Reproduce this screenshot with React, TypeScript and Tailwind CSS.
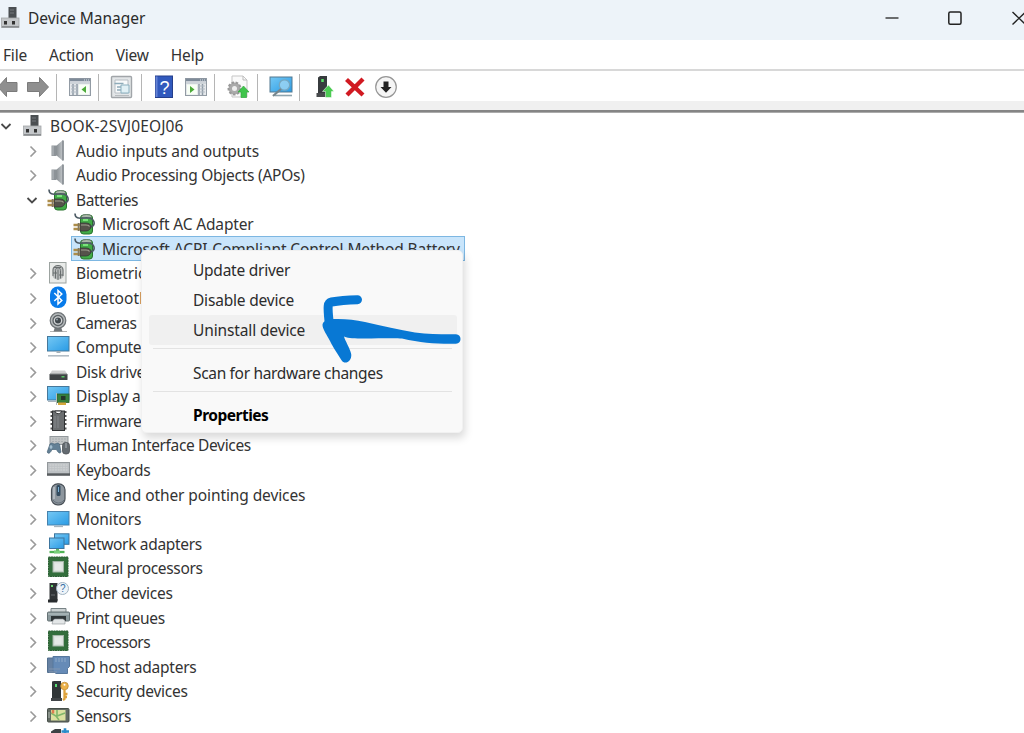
import type { ReactNode } from "react";

type IconName =
  | "host" | "speaker" | "battery" | "fingerprint" | "bluetooth" | "camera"
  | "computer" | "disk" | "display" | "firmware" | "hid" | "keyboard" | "mouse"
  | "monitor" | "network" | "chip" | "other" | "printer" | "sd" | "security"
  | "sensors" | "software";

interface TreeNode {
  label: string;
  icon: IconName;
  level: 0 | 1 | 2;
  open?: boolean;
  selected?: boolean;
  tracking?: string;
}

const nodes: TreeNode[] = [
  { label: "BOOK-2SVJ0EOJ06", icon: "host", level: 0, open: true, tracking: "tracking-[0.15px]" },
  { label: "Audio inputs and outputs", icon: "speaker", level: 1, tracking: "tracking-[-0.07px]" },
  { label: "Audio Processing Objects (APOs)", icon: "speaker", level: 1 },
  { label: "Batteries", icon: "battery", level: 1, open: true, tracking: "tracking-[-0.35px]" },
  { label: "Microsoft AC Adapter", icon: "battery", level: 2, tracking: "tracking-[-0.15px]" },
  { label: "Microsoft ACPI-Compliant Control Method Battery", icon: "battery", level: 2, selected: true, tracking: "tracking-[-0.1px]" },
  { label: "Biometric devices", icon: "fingerprint", level: 1, tracking: "tracking-[-0.1px]" },
  { label: "Bluetooth", icon: "bluetooth", level: 1, tracking: "tracking-[0.1px]" },
  { label: "Cameras", icon: "camera", level: 1, tracking: "tracking-[-0.5px]" },
  { label: "Computer", icon: "computer", level: 1 },
  { label: "Disk drives", icon: "disk", level: 1 },
  { label: "Display adapters", icon: "display", level: 1, tracking: "tracking-[-0.1px]" },
  { label: "Firmware", icon: "firmware", level: 1, tracking: "tracking-[-0.4px]" },
  { label: "Human Interface Devices", icon: "hid", level: 1, tracking: "tracking-[-0.35px]" },
  { label: "Keyboards", icon: "keyboard", level: 1 },
  { label: "Mice and other pointing devices", icon: "mouse", level: 1, tracking: "tracking-[-0.1px]" },
  { label: "Monitors", icon: "monitor", level: 1, tracking: "tracking-[-0.05px]" },
  { label: "Network adapters", icon: "network", level: 1, tracking: "tracking-[-0.32px]" },
  { label: "Neural processors", icon: "chip", level: 1, tracking: "tracking-[-0.32px]" },
  { label: "Other devices", icon: "other", level: 1 },
  { label: "Print queues", icon: "printer", level: 1, tracking: "tracking-[-0.32px]" },
  { label: "Processors", icon: "chip", level: 1, tracking: "tracking-[-0.5px]" },
  { label: "SD host adapters", icon: "sd", level: 1 },
  { label: "Security devices", icon: "security", level: 1 },
  { label: "Sensors", icon: "sensors", level: 1, tracking: "tracking-[-0.35px]" },
  { label: "", icon: "software", level: 1 },
];

const levelPadding = { 0: "pl-0", 1: "pl-[26px]", 2: "pl-[52px]" };

// All tree icons share a 24x24 grid
const icons: Record<IconName, ReactNode> = {
  host: (
    <>
      <rect x="10.5" y="1" width="8" height="12" fill="#4b4f52" />
      <path d="M12 4h4M12 7h4" stroke="#74797c" />
      <rect x="3.5" y="12" width="17.5" height="9.5" fill="#c3c6c9" stroke="#a3a6a9" strokeWidth=".8" />
      <path d="M4 20.8h17" stroke="#85888b" strokeWidth="1.4" />
      <rect x="6" y="15" width="3" height="3.5" fill="#333" />
      <rect x="14" y="15" width="3" height="3.5" fill="#333" />
    </>
  ),
  speaker: (
    <>
      <path d="M10 7 17 1v21l-7-6z" fill="url(#dm-steel)" />
      <path d="M17 1.5v20" stroke="#8b9196" strokeWidth="1.8" />
      <rect x="5.5" y="6.5" width="5" height="10.5" fill="#8d9398" />
      <path d="M7 7v9.5" stroke="#b9bec2" />
    </>
  ),
  battery: (
    <>
      <rect x="8.5" y="3" width="12" height="19" rx="3" fill="#42ab47" stroke="#26722b" />
      <ellipse cx="14.5" cy="4.5" rx="5" ry="2" fill="#a9b8a8" stroke="#56705a" strokeWidth=".8" />
      <path d="M11 9v-2h5v2z" fill="#7be27c" />
      <path d="M3 1.5c0 5 4 5 8 4.5s10-.5 11 4-3 5-6 5" fill="none" stroke="#4d5b65" strokeWidth="1.6" />
      <path d="M8 11h6c3 0 5 1.5 5 3.5s-2 4.5-5 4.5H8z" fill="#55524a" stroke="#2e3230" strokeWidth=".7" />
      <path d="M9 13h5c2 0 3 .5 3.5 1.5" fill="none" stroke="#a09f90" strokeWidth="1.2" />
      <path d="M1.5 13H8M1.5 17H8" stroke="#ad8d4a" strokeWidth="2.3" />
      <path d="M6.5 11v8" stroke="#83785f" strokeWidth="1.6" />
    </>
  ),
  fingerprint: (
    <>
      <rect x="3.5" y="1.5" width="16.5" height="20.5" fill="#e9ebe9" stroke="#9ca3a0" />
      <path d="M6.5 8.5c0-6 11-6 11 0V14c0 6-11 6-11 0z" fill="#b9bcbc" />
      <path d="M7 15V9c0-6 10-6 10 0v6M9.5 17.5V9.5c0-3.5 5-3.5 5 0v8M12 8.5V19M7 12h4M13 14h4M8 6.5h7" fill="none" stroke="#696e6f" />
    </>
  ),
  bluetooth: (
    <>
      <rect x="4" y=".5" width="16.5" height="21.5" rx="8" fill="#087bea" />
      <path d="m8.3 7 7.5 7.5-3.8 3.5V4.5l3.8 3.5-7.5 7" fill="none" stroke="#fff" strokeWidth="1.5" />
    </>
  ),
  camera: (
    <>
      <path d="M4 20.5h17" stroke="#b4b4b4" />
      <path d="m9 16-1.5 4.5h9L15 16z" fill="#717679" />
      <circle cx="12" cy="9.5" r="7.8" fill="#b5b9bb" stroke="#6d7275" strokeWidth="1.2" />
      <circle cx="12" cy="9.5" r="5" fill="#d1d4d5" stroke="#5b6165" strokeWidth="1.3" />
      <circle cx="12" cy="9.5" r="3" fill="#41484d" />
      <circle cx="11" cy="8.5" r="1" fill="#909fa7" />
    </>
  ),
  computer: (
    <>
      <rect x="1.5" y="1.5" width="21.5" height="14.5" fill="url(#dm-screen)" stroke="#46789b" />
      <path d="M10.5 16h4v2h-4z" fill="#a4b0b8" />
      <path d="M2 20.8h21" stroke="#b2bdc5" strokeWidth="1.6" />
    </>
  ),
  disk: (
    <>
      <path d="M6 10.5h13l2.5 4h-18z" fill="#cfcfcf" />
      <rect x="3.5" y="14" width="18" height="6" rx=".5" fill="#3f4244" />
      <path d="M4 14h17" stroke="#858889" />
      <rect x="15.5" y="16" width="3" height="1.5" fill="#56c465" />
    </>
  ),
  display: (
    <>
      <rect x="1.5" y="2.5" width="21.5" height="13.5" fill="url(#dm-screen)" stroke="#46789b" />
      <path d="M2 17.5h8" stroke="#a9b5bd" />
      <rect x="11" y="10" width="12" height="8.5" fill="#357f3c" stroke="#286030" strokeWidth=".8" />
      <rect x="15" y="12" width="4.5" height="4" fill="#26352b" />
      <path d="M12 18.5h8v2.5h-8z" fill="#d4a73a" />
      <path d="M10.5 9v12" stroke="#b6bcb8" />
    </>
  ),
  firmware: (
    <>
      <path d="M4.5 3h16M4.5 7h16M4.5 11h16M4.5 15h16M4.5 19.5h16" stroke="#565656" strokeWidth="2.2" />
      <rect x="6.5" y="2" width="12" height="19.5" fill="#6b6e70" stroke="#303234" />
      <path d="M9 2c0 3.5 6.5 3.5 6.5 0z" fill="#fff" stroke="#303234" />
      <path d="M9 7v12M12 7v12" stroke="#7d8082" strokeWidth="1.5" />
    </>
  ),
  hid: (
    <>
      <rect x="4" y="3.5" width="18" height="8" fill="#c2c5c6" stroke="#93999d" />
      <path d="M6 6h14M6 8.5h14" stroke="#a9aeb1" strokeDasharray="2 1" />
      <path d="M4 11c2-2 3 0 4.5 0s3-2 5 0l1.5 8c-1 2.5-3.5 0-4.5-2.500H6C5 19 2.500 22 1.200 19z" fill="#638095" stroke="#496377" strokeWidth=".7" />
      <path d="M5 12v4M3.500 14h3" stroke="#b8d2e2" />
      <rect x="16.5" y="9.5" width="7" height="11.5" rx="3" fill="#646b71" stroke="#4b5155" strokeWidth=".8" />
      <path d="M20 10v5" stroke="#adb4ba" />
    </>
  ),
  keyboard: (
    <>
      <rect x="1.5" y="4.5" width="22" height="12.5" fill="#bdc1c4" stroke="#93989b" />
      <path d="M3.500 7h18M3.500 9.500h18M3.500 12h18" stroke="#cdd0d1" strokeWidth="1.3" strokeDasharray="2 .7" />
      <path d="M1 16.500h23" stroke="#595d60" strokeWidth="2.4" />
    </>
  ),
  mouse: (
    <>
      <rect x="5.5" y=".8" width="13.5" height="21" rx="6" fill="#8d969e" stroke="#495057" strokeWidth="1.2" />
      <path d="M8 4v12" stroke="#c3cad0" strokeWidth="1.3" />
      <rect x="10.5" y="2" width="4" height="11" rx="1.5" fill="#344c60" />
      <path d="M12.5 4v5" stroke="#7ab0d4" />
      <path d="M7 17c3 4 8 4 11 0" fill="none" stroke="#65707a" />
    </>
  ),
  monitor: (
    <>
      <rect x="1.5" y="4.5" width="21.5" height="13.5" fill="url(#dm-screen)" stroke="#4682ad" />
      <path d="M8 19.5h9" stroke="#a8b5be" strokeWidth="1.3" />
    </>
  ),
  network: (
    <>
      <rect x="8.5" y="1.8" width="14.5" height="10.5" fill="url(#dm-screen)" stroke="#3c759e" />
      <rect x="3.5" y="6" width="14.5" height="10.5" fill="url(#dm-screen)" stroke="#3c759e" />
      <path d="M10 17h3v2h-3z" fill="#60b265" />
      <path d="M3.5 20h15" stroke="#4fb455" strokeWidth="2.3" />
      <path d="M8 18.5h6v3H8z" fill="#77cf79" />
    </>
  ),
  chip: (
    <>
      <rect x="2.5" y="1" width="19.5" height="19.5" fill="#336e3c" />
      <rect x="2.5" y="1" width="19.5" height="19.5" fill="none" stroke="#2c6135" strokeDasharray="2 .5" />
      <rect x="7" y="5.5" width="10.5" height="10.5" fill="#dce3de" stroke="#a5b6a8" />
      <rect x="9" y="7.5" width="6.5" height="6.5" fill="#e6eae7" />
    </>
  ),
  other: (
    <>
      <path d="M3.5 2h8v17h-8z" fill="#303436" />
      <path d="M2 18.5h10l-1 3H2z" fill="#292c2e" />
      <path d="M5 5h2" stroke="#68d572" strokeWidth="2" />
      <path d="M5 14h4" stroke="#666b6e" />
      <circle cx="16.5" cy="7.5" r="6" fill="#eef4f9" stroke="#a2b4c2" />
      <text x="14" y="11" fontSize="10" fontFamily="Liberation Sans, sans-serif" fill="#336ca3">?</text>
    </>
  ),
  printer: (
    <>
      <path d="M5 7V2.5h15V7" fill="#cbd1d2" stroke="#788386" />
      <rect x="1.5" y="6" width="22" height="9" rx="1" fill="#8b999c" stroke="#667275" />
      <path d="M2 8h21" stroke="#bdc8ca" />
      <path d="M5 10h15v5H5z" fill="#303638" />
      <path d="m7 14.5 1.5-1.5h8.5l2 1.5v3.5H6z" fill="#e3e6e7" stroke="#8b9193" strokeWidth=".6" />
    </>
  ),
  sd: (
    <>
      <path d="M1.5 3h14v14.5h-14z" fill="#6681a3" stroke="#53708f" />
      <path d="M7 1.5h16.5v10l-2 2v5H10l-3-2.500z" fill="#668bb7" stroke="#57789d" />
      <path d="M10 3v4M13 3v4M16 3v4M19 3v4" stroke="#8fabc9" />
      <path d="M3 14h11M3 17h8" stroke="#8296b0" />
    </>
  ),
  security: (
    <>
      <path d="M6 2.5 8 2h7v17.500H6z" fill="#313638" />
      <path d="M5 19h11v3H5z" fill="#414548" />
      <path d="M10 5v3" stroke="#58dc73" strokeWidth="2" />
      <circle cx="18.5" cy="7" r="3.8" fill="#edb34b" stroke="#c18c33" strokeWidth=".8" />
      <circle cx="18.5" cy="5.8" r="1" fill="#fff" />
      <path d="M18.500 10v10l-1.500 1M19 15h2.500M19 18h2" fill="none" stroke="#dfa33d" strokeWidth="2.3" />
    </>
  ),
  sensors: (
    <>
      <rect x="1.5" y="4.5" width="21.5" height="13.5" rx="1" fill="#626a63" stroke="#464e48" />
      <rect x="5" y="6" width="14.5" height="10.5" fill="#dce1a0" />
      <path d="m5 9 5 3 3 4M11 6v6l8-3" fill="none" stroke="#80b66a" strokeWidth="1.6" />
      <path d="M7 6v3.5" stroke="#dc7e50" strokeWidth="2.5" />
      <path d="M3 8v6" stroke="#b2bbb3" />
    </>
  ),
  software: (
    <>
      <path d="M5 3.5 9 1h6v21H5z" fill="#3d4245" />
      <path d="M19 .3v7M15.5 3.5H23" stroke="#2c8cc9" strokeWidth="2.6" />
    </>
  ),
};

function Chevron({ open }: { open?: boolean }) {
  return (
    <svg width="12" height="12" viewBox="0 0 12 12" fill="none" className="shrink-0">
      {open ? (
        <path d="m1.500 4 4.500 4.500L10.500 4" stroke="#4a4a4a" strokeWidth="1.8" />
      ) : (
        <path d="m4.500 1.500 5 5-5 5" stroke="#9a9a9a" strokeWidth="1.6" />
      )}
    </svg>
  );
}

function TreeRow({ node }: { node: TreeNode }) {
  return (
    <li className={`flex h-[24.58px] items-center ${levelPadding[node.level]}`}>
      <span className="flex w-5 items-center">
        {node.level !== 2 && <Chevron open={node.open} />}
      </span>
      <span
        className={
          node.selected
            ? "-ml-px flex h-[25px] w-[394px] items-center border border-[#7db7e2] bg-[#c9e5fb]"
            : "flex items-center"
        }
      >
        <svg width="24" height="24" viewBox="0 0 24 24" className="shrink-0">
          {icons[node.icon]}
        </svg>
        <span className={`ml-1.5 whitespace-nowrap pt-px leading-[23px] ${node.tracking ?? "tracking-[-0.25px]"}`}>
          {node.label}
        </span>
      </span>
    </li>
  );
}

function Separator() {
  return <div className="h-[27px] w-px shrink-0 bg-[#b5b5b5]" />;
}

function ToolIcon({ children }: { children: ReactNode }) {
  return (
    <svg width="24" height="24" viewBox="0 0 24 24" fill="none" className="shrink-0">
      {children}
    </svg>
  );
}

function PanelGlyph({ flip }: { flip?: boolean }) {
  return (
    <>
      <rect x="1.5" y="3.5" width="21" height="17" fill="#e5e8eb" stroke="#929ba4" />
      <path d="M2 5h20" stroke="#7e8b99" strokeWidth="2.5" />
      <path d="M16 5h5" stroke="#dce3e8" strokeDasharray="1 1" />
      <path d="M2 8h20" stroke="#b7c0c8" />
      {flip ? (
        <>
          <rect x="3" y="9.5" width="10" height="10" fill="#f8fff5" />
          <path d="m6 11 4.500 3.500L6 18z" fill="#4cab39" />
          <path d="M15 9v11M18.500 9v11" stroke="#8f9ba6" strokeWidth="1.5" />
          <path d="M15 11h6M15 14h6M15 17h6" stroke="#b2bbc4" />
        </>
      ) : (
        <>
          <rect x="11" y="9.5" width="10" height="10" fill="#f8fff5" />
          <path d="m18 11-4.500 3.500L18 18z" fill="#4cab39" />
          <path d="M5 9v11M9 9v11" stroke="#8f9ba6" strokeWidth="1.5" />
          <path d="M3 11h6M3 14h6M3 17h6" stroke="#b2bbc4" />
        </>
      )}
    </>
  );
}

function Toolbar() {
  return (
    <div className="flex h-[30px] items-center bg-white pt-0.5">
      <div className="-ml-[3px] flex items-center gap-1 pr-[7px]">
        <ToolIcon>
          <path d="M1 12 9.500 2.500V7.500h10.500v9H9.500v5z" fill="#8f8f8f" stroke="#7b7b7b" />
        </ToolIcon>
        <ToolIcon>
          <path d="M23.500 12 14.500 2.500V7.500H2.500v9h12v5z" fill="#8f8f8f" stroke="#7b7b7b" />
        </ToolIcon>
      </div>
      <Separator />
      <div className="pl-[11px] pr-[6px]"><ToolIcon><PanelGlyph /></ToolIcon></div>
      <Separator />
      <div className="pl-[11px] pr-[7px]">
        <ToolIcon>
          <rect x="1.5" y="1.5" width="20" height="21" rx="1" fill="#e3e6e8" stroke="#a1a5a9" strokeWidth="1.4" />
          <path d="M5 5h13v13H5z" fill="#f8fafb" stroke="#b7bec4" />
          <path d="M4.500 8.500h9M7 12h4M7 15h4" stroke="#8eabb9" strokeWidth="1.3" />
          <path d="M11 10h8v8h-8z" fill="#e1f0f5" stroke="#8bb0bf" />
          <path d="M5 20.500h14" stroke="#b8bcbf" />
        </ToolIcon>
      </div>
      <Separator />
      <div className="flex gap-2 pl-[10px] pr-[6px]">
        <ToolIcon>
          <rect x="3.5" y="1" width="17" height="21.5" fill="#3159bd" stroke="#253f8b" />
          <path d="M4.500 1.500v20.500" stroke="#6583d4" strokeWidth="2" />
          <text x="7.5" y="18.5" fontSize="18" fontFamily="Liberation Sans, sans-serif" fill="#fff">?</text>
        </ToolIcon>
        <ToolIcon><PanelGlyph flip /></ToolIcon>
      </div>
      <Separator />
      <div className="pl-[11px] pr-[7px]">
        <ToolIcon>
          <path d="M6 1h11l4 4v17H6z" fill="#fafafa" stroke="#c5c5c5" />
          <path d="M17 1v4h4" stroke="#bbb" />
          <circle cx="8.5" cy="13.5" r="6" fill="#aaa" stroke="#999" strokeWidth="2" strokeDasharray="2.5 1.6" />
          <circle cx="8.5" cy="13.5" r="2.5" fill="#eee" />
          <path d="m17.500 11 5.500 6h-2.500v5.500H15V17h-3z" fill="#3fc54b" stroke="#35a740" strokeWidth=".7" />
        </ToolIcon>
      </div>
      <Separator />
      <div className="pl-[11px] pr-[6px]">
        <ToolIcon>
          <rect x="1" y="2" width="22" height="15" fill="url(#dm-screen)" stroke="#537990" />
          <path d="M6 20.500h17" stroke="#8fa4ae" strokeWidth="1.6" />
          <circle cx="15.5" cy="10" r="5.2" fill="#9ed6f4" fillOpacity=".8" stroke="#75a7c0" strokeWidth="1.3" />
          <path d="m12 14-8 7" stroke="#76858c" strokeWidth="2.3" />
        </ToolIcon>
      </div>
      <Separator />
      <div className="flex items-center gap-[7px] pl-[12px]">
        <ToolIcon>
          <path d="M6 2.500 8 1h7v18H6z" fill="#373b3d" />
          <path d="M4.500 18H16v4H4.500z" fill="#474a4c" />
          <path d="M10.500 4v3" stroke="#58e166" strokeWidth="2.5" />
          <path d="m16.500 10 5.500 6.500h-2.500v6h-6v-6h-3z" fill="#4bca52" stroke="#fff" strokeWidth=".5" />
        </ToolIcon>
        <ToolIcon>
          <path d="m3.500 4.500 16.500 15.500M20 4 4 20" stroke="#d11921" strokeWidth="4.3" />
        </ToolIcon>
        <ToolIcon>
          <circle cx="12" cy="12" r="10.3" fill="#f5f5f5" stroke="#969696" strokeWidth="1.2" />
          <path d="M9.500 6.500h5v5.500h3L12 17.800 6.500 12h3z" fill="#222" />
        </ToolIcon>
      </div>
    </div>
  );
}

function TitleBar() {
  return (
    <header className="flex h-10 items-center bg-[#edf3f9] pb-1">
      <svg width="24" height="24" viewBox="0 0 24 24" className="-ml-0.5 shrink-0">
        {icons.host}
      </svg>
      <h1 className="ml-1.5 leading-6 tracking-[-0.02px] text-[#2b2b2b]">Device Manager</h1>
      <div className="ml-auto -mr-[3px] flex items-center gap-[49px] text-[#222]">
        <svg width="14" height="14" viewBox="0 0 14 14" fill="none">
          <path d="M.5 7h13" stroke="currentColor" strokeWidth="1.3" />
        </svg>
        <svg width="14" height="14" viewBox="0 0 14 14" fill="none">
          <rect x=".8" y="1" width="12.2" height="12.2" rx="1.5" stroke="currentColor" strokeWidth="1.5" />
        </svg>
        <svg width="16" height="14" viewBox="0 0 16 14" fill="none">
          <path d="m1.500 1 13 12.500M14.500 1 1.500 13.500" stroke="currentColor" strokeWidth="1.4" />
        </svg>
      </div>
    </header>
  );
}

function ContextMenu() {
  return (
    <div className="absolute left-[141px] top-[250px] h-[183px] w-[322px] rounded-[5px] border border-[#f1f1f1] bg-[#f9f9f9] pl-[7px] pr-[5px] pt-[4px] tracking-[-0.25px] text-[#2c2c2c] shadow-[2px_5px_9px_rgba(0,0,0,0.15)]">
      <div className="flex h-[30px] items-center pl-11">Update driver</div>
      <div className="flex h-[30px] items-center pl-11 tracking-[-0.2px]">Disable device</div>
      <div className="flex h-[30px] items-center rounded-[3px] bg-[#f0f0f0] pl-11 tracking-[-0.13px]">Uninstall device</div>
      <div className="ml-1 mr-[5px] mt-[3px] h-px bg-[#e3e3e3]" />
      <div className="mt-[9px] flex h-[30px] items-center pl-11 tracking-[-0.33px]">Scan for hardware changes</div>
      <div className="ml-1 mr-[5px] mt-[3px] h-px bg-[#e3e3e3]" />
      <div className="mt-2 flex h-[30px] items-center pl-11 font-bold tracking-[-0.5px] text-black">Properties</div>
    </div>
  );
}

// Hand-drawn marker arrow pointing at "Uninstall device"
function MarkerArrow() {
  return (
    <svg width="146" height="74" viewBox="318 292 146 74" className="absolute left-[318px] top-[292px]" fill="#0878d4">
      <path
        d="M357.500 299.700c-9 .2-18 .8-26 2.300-4 .8-4 4-2.500 19"
        fill="none"
        stroke="#0878d4"
        strokeWidth="9"
        strokeLinecap="round"
        strokeLinejoin="round"
      />
      <path d="M322.500 325c0-3 4-6 9.500-6 12-.5 22 .5 33 3 18 4 34 8 50 10.500 15 2 28 1.800 41 1.800 6 .2 6 9.400 0 9.400-19 .3-34-.7-54-5.200-7-.8-35 .3-50-.3-3 0-5-.7-8-1.700 1 4 6 12 7.200 17.500 1 7-6.200 11.500-9.500 6.500-3-5-8.700-13-11.700-19.500-2.500-5-7.500-12-7.500-16z" />
    </svg>
  );
}

export default function App() {
  return (
    <div className="relative h-[733px] w-[1024px] overflow-hidden bg-white font-['Noto_Sans',sans-serif] text-[15.5px] leading-6 text-[#333]">
      <svg width="0" height="0" className="absolute">
        <defs>
          <linearGradient id="dm-screen" x1="0" y1="0" x2="1" y2="1">
            <stop offset="0" stopColor="#75c8f4" />
            <stop offset="1" stopColor="#299be5" />
          </linearGradient>
          <linearGradient id="dm-steel" x1="0" y1="0" x2="1" y2="0">
            <stop offset="0" stopColor="#868c91" />
            <stop offset="1" stopColor="#c4c8cb" />
          </linearGradient>
        </defs>
      </svg>
      <TitleBar />
      <nav className="flex h-[29px] items-center gap-[22px] pl-[3px] pt-px tracking-[-0.2px]">
        <span>File</span>
        <span>Action</span>
        <span>View</span>
        <span>Help</span>
      </nav>
      <div className="h-0.5 bg-[#d8d8d8]" />
      <Toolbar />
      <div className="h-[9px] bg-[#f0f0f0]" />
      <div className="h-[3px] border-b border-[#ababab] bg-[#858585]" />
      <ul className="pt-[0.7px]">
        {nodes.map((node, i) => (
          <TreeRow key={i} node={node} />
        ))}
      </ul>
      <ContextMenu />
      <MarkerArrow />
    </div>
  );
}
